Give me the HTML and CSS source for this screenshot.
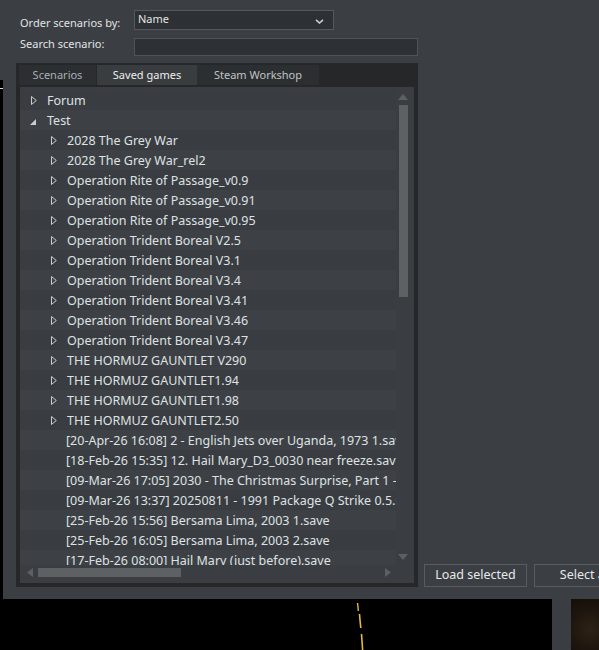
FILE: index.html
```html
<!DOCTYPE html>
<html>
<head>
<meta charset="utf-8">
<link rel="stylesheet" href="styles.css">
</head>
<body>
<div class="screen">
  <div class="top">
    <div class="edge"></div>
    <div class="window">
      <div class="form">
        <div class="labels">
          <div class="label">Order scenarios by:</div>
          <div class="label">Search scenario:</div>
        </div>
        <div class="fields">
          <div class="select">
            <span>Name</span>
            <svg class="chev" width="9" height="5" viewBox="0 0 9 5"><polyline points="1,0.8 4.5,4 8,0.8" fill="none" stroke="#c9cdd1" stroke-width="1.6"/></svg>
          </div>
          <div class="search"></div>
        </div>
      </div>
      <div class="workspace">
        <div class="tabpanel">
          <div class="tabs">
            <div class="tab">Scenarios</div>
            <div class="tab active">Saved games</div>
            <div class="tab wide">Steam Workshop</div>
          </div>
          <div class="tree">
            <div class="rows">
              <div class="row"><svg class="tri" width="6" height="9" viewBox="0 0 6 9"><polygon points="0.5,0.5 5.3,4.5 0.5,8.5" fill="none" stroke="#c9cdd1" stroke-width="1"/></svg><span>Forum</span></div>
              <div class="row"><svg class="tri open" width="6" height="6" viewBox="0 0 6 6"><polygon points="6,0 6,6 0,6" fill="#c9cdd1"/></svg><span>Test</span></div>
              <div class="row child"><svg class="tri" width="6" height="9" viewBox="0 0 6 9"><polygon points="0.5,0.5 5.3,4.5 0.5,8.5" fill="none" stroke="#c9cdd1" stroke-width="1"/></svg><span>2028 The Grey War</span></div>
              <div class="row child"><svg class="tri" width="6" height="9" viewBox="0 0 6 9"><polygon points="0.5,0.5 5.3,4.5 0.5,8.5" fill="none" stroke="#c9cdd1" stroke-width="1"/></svg><span>2028 The Grey War_rel2</span></div>
              <div class="row child"><svg class="tri" width="6" height="9" viewBox="0 0 6 9"><polygon points="0.5,0.5 5.3,4.5 0.5,8.5" fill="none" stroke="#c9cdd1" stroke-width="1"/></svg><span>Operation Rite of Passage_v0.9</span></div>
              <div class="row child"><svg class="tri" width="6" height="9" viewBox="0 0 6 9"><polygon points="0.5,0.5 5.3,4.5 0.5,8.5" fill="none" stroke="#c9cdd1" stroke-width="1"/></svg><span>Operation Rite of Passage_v0.91</span></div>
              <div class="row child"><svg class="tri" width="6" height="9" viewBox="0 0 6 9"><polygon points="0.5,0.5 5.3,4.5 0.5,8.5" fill="none" stroke="#c9cdd1" stroke-width="1"/></svg><span>Operation Rite of Passage_v0.95</span></div>
              <div class="row child"><svg class="tri" width="6" height="9" viewBox="0 0 6 9"><polygon points="0.5,0.5 5.3,4.5 0.5,8.5" fill="none" stroke="#c9cdd1" stroke-width="1"/></svg><span>Operation Trident Boreal V2.5</span></div>
              <div class="row child"><svg class="tri" width="6" height="9" viewBox="0 0 6 9"><polygon points="0.5,0.5 5.3,4.5 0.5,8.5" fill="none" stroke="#c9cdd1" stroke-width="1"/></svg><span>Operation Trident Boreal V3.1</span></div>
              <div class="row child"><svg class="tri" width="6" height="9" viewBox="0 0 6 9"><polygon points="0.5,0.5 5.3,4.5 0.5,8.5" fill="none" stroke="#c9cdd1" stroke-width="1"/></svg><span>Operation Trident Boreal V3.4</span></div>
              <div class="row child"><svg class="tri" width="6" height="9" viewBox="0 0 6 9"><polygon points="0.5,0.5 5.3,4.5 0.5,8.5" fill="none" stroke="#c9cdd1" stroke-width="1"/></svg><span>Operation Trident Boreal V3.41</span></div>
              <div class="row child"><svg class="tri" width="6" height="9" viewBox="0 0 6 9"><polygon points="0.5,0.5 5.3,4.5 0.5,8.5" fill="none" stroke="#c9cdd1" stroke-width="1"/></svg><span>Operation Trident Boreal V3.46</span></div>
              <div class="row child"><svg class="tri" width="6" height="9" viewBox="0 0 6 9"><polygon points="0.5,0.5 5.3,4.5 0.5,8.5" fill="none" stroke="#c9cdd1" stroke-width="1"/></svg><span>Operation Trident Boreal V3.47</span></div>
              <div class="row child"><svg class="tri" width="6" height="9" viewBox="0 0 6 9"><polygon points="0.5,0.5 5.3,4.5 0.5,8.5" fill="none" stroke="#c9cdd1" stroke-width="1"/></svg><span>THE HORMUZ GAUNTLET V290</span></div>
              <div class="row child"><svg class="tri" width="6" height="9" viewBox="0 0 6 9"><polygon points="0.5,0.5 5.3,4.5 0.5,8.5" fill="none" stroke="#c9cdd1" stroke-width="1"/></svg><span>THE HORMUZ GAUNTLET1.94</span></div>
              <div class="row child"><svg class="tri" width="6" height="9" viewBox="0 0 6 9"><polygon points="0.5,0.5 5.3,4.5 0.5,8.5" fill="none" stroke="#c9cdd1" stroke-width="1"/></svg><span>THE HORMUZ GAUNTLET1.98</span></div>
              <div class="row child"><svg class="tri" width="6" height="9" viewBox="0 0 6 9"><polygon points="0.5,0.5 5.3,4.5 0.5,8.5" fill="none" stroke="#c9cdd1" stroke-width="1"/></svg><span>THE HORMUZ GAUNTLET2.50</span></div>
              <div class="row leaf"><span>[20-Apr-26 16:08] 2 - English Jets over Uganda, 1973 1.save</span></div>
              <div class="row leaf"><span>[18-Feb-26 15:35] 12. Hail Mary_D3_0030 near freeze.save</span></div>
              <div class="row leaf"><span>[09-Mar-26 17:05] 2030 - The Christmas Surprise, Part 1 - 1.save</span></div>
              <div class="row leaf"><span>[09-Mar-26 13:37] 20250811 - 1991 Package Q Strike 0.5.save</span></div>
              <div class="row leaf"><span>[25-Feb-26 15:56] Bersama Lima, 2003 1.save</span></div>
              <div class="row leaf"><span>[25-Feb-26 16:05] Bersama Lima, 2003 2.save</span></div>
              <div class="row leaf"><span>[17-Feb-26 08:00] Hail Mary (just before).save</span></div>
            </div>
            <div class="vscroll">
              <svg width="10" height="6" viewBox="0 0 10 6"><polygon points="5,0 10,6 0,6" fill="#5c6064"/></svg>
              <div class="vthumb"></div>
              <div class="vspace"></div>
              <svg width="10" height="6" viewBox="0 0 10 6"><polygon points="0,0 10,0 5,6" fill="#5c6064"/></svg>
            </div>
            <div class="hscroll">
              <svg width="6" height="9" viewBox="0 0 6 9"><polygon points="6,0 6,9 0,4.5" fill="#5c6064"/></svg>
              <div class="hthumb"></div>
              <div class="hspace"></div>
              <svg width="6" height="9" viewBox="0 0 6 9"><polygon points="0,0 6,4.5 0,9" fill="#5c6064"/></svg>
            </div>
            <div class="corner"></div>
          </div>
        </div>
        <div class="actions">
          <div class="btn">Load selected</div>
          <div class="btn">Select all</div>
        </div>
      </div>
    </div>
  </div>
  <div class="under">
    <div class="void">
      <svg width="12" height="51" viewBox="0 0 12 51"><polyline points="2.5,4 3,8 3.3,12" fill="none" stroke="#e2bd36" stroke-width="1.4"/><polyline points="4.5,15 5,21 5.8,29" fill="none" stroke="#e2bd36" stroke-width="1.6"/><polyline points="6.5,35 7,42 7.6,51" fill="none" stroke="#e2bd36" stroke-width="1.6"/></svg>
    </div>
    <div class="pillar"></div>
    <div class="photo"></div>
  </div>
</div>
</body>
</html>
```
FILE: styles.css
```css
html, body {
  margin: 0;
  padding: 0;
  background: #000;
}
.screen {
  width: 599px;
  height: 650px;
  overflow: hidden;
  font-family: "Noto Sans", "Open Sans", sans-serif;
  font-size: 11px;
  color: #e2e4e6;
}
.top {
  display: flex;
  height: 599px;
}
.edge {
  width: 3px;
  flex-shrink: 0;
  background: linear-gradient(#3b3f43 0 80px, #000 80px 88px, #d8d8d8 88px 89px, #000 89px);
}
.window {
  flex: 1;
  min-width: 0;
  background: #3b3f43;
  padding: 10px 0 0 13px;
  box-sizing: border-box;
  overflow: hidden;
}
.form {
  display: flex;
  padding-left: 4px;
}
.labels {
  width: 114px;
  flex-shrink: 0;
  display: flex;
  flex-direction: column;
  gap: 5px;
  padding-top: 5px;
}
.label {
  line-height: 16px;
  height: 16px;
  white-space: nowrap;
}
.fields {
  display: flex;
  flex-direction: column;
  gap: 8px;
}
.select {
  width: 200px;
  height: 20px;
  box-sizing: border-box;
  border: 1px solid #55595d;
  background: #2d3034;
  display: flex;
  align-items: flex-start;
  justify-content: space-between;
  padding: 0 9px 0 3px;
  line-height: 14px;
}
.select span {
  margin-top: 1px;
}
.chev {
  margin-top: 8px;
}
.search {
  width: 284px;
  height: 18px;
  box-sizing: border-box;
  border: 1px solid #505458;
  background: #2d3034;
}
.workspace {
  margin-top: 7px;
  display: flex;
  align-items: flex-end;
  gap: 6px;
}
.tabpanel {
  width: 402px;
  height: 524px;
  flex-shrink: 0;
  box-sizing: border-box;
  background: #262728;
  padding: 2px 4px 4px 4px;
  display: flex;
  flex-direction: column;
  gap: 2px;
}
.tabs {
  display: flex;
  height: 20px;
  margin-left: -1px;
}
.tab {
  width: 77px;
  height: 20px;
  line-height: 20px;
  text-align: center;
  background: #2c2f32;
  color: #a9aeb3;
}
.tab.active {
  width: 100px;
  margin-left: 1px;
  background: #3a3d40;
  color: #eceeef;
}
.tab.wide {
  width: 122px;
  color: #c0c3c6;
}
.tree {
  width: 394px;
  height: 496px;
  background: #3a3e42;
  display: grid;
  grid-template-columns: 376px 18px;
  grid-template-rows: 478px 18px;
}
.rows {
  overflow: hidden;
  padding-top: 3px;
}
.row {
  height: 20px;
  display: flex;
  align-items: center;
  white-space: nowrap;
  background: #393d41;
  color: #dfe1e3;
  font-size: 12.5px;
}
.row:nth-child(even) {
  background: #3d4145;
}
.row .tri {
  flex-shrink: 0;
  margin-left: 11px;
  margin-right: 10px;
}
.row .tri.open {
  margin-left: 10px;
  margin-right: 11px;
  margin-top: 3px;
}
.row.child .tri {
  margin-left: 31px;
}
.row.leaf span {
  margin-left: 46px;
}
.vscroll {
  display: flex;
  flex-direction: column;
  align-items: flex-start;
  padding: 7px 0 5px 2px;
}
.vthumb {
  width: 9px;
  margin-left: 1px;
  height: 192px;
  margin-top: 5px;
  background: #5e6164;
}
.vspace {
  flex: 1;
}
.hscroll {
  display: flex;
  align-items: flex-start;
  padding: 3px 5px 0 7px;
}
.hthumb {
  width: 143px;
  height: 9px;
  margin-left: 5px;
  background: #5e6164;
}
.hspace {
  flex: 1;
}
.actions {
  display: flex;
  gap: 7px;
  flex-shrink: 0;
}
.btn {
  width: 103px;
  height: 23px;
  box-sizing: border-box;
  border: 1px solid #585c60;
  background: #3b3f43;
  text-align: center;
  line-height: 20px;
  font-size: 12.5px;
  color: #e6e8ea;
  white-space: nowrap;
  flex-shrink: 0;
}
.under {
  display: flex;
  height: 51px;
}
.void {
  width: 552px;
  flex-shrink: 0;
  background: #000;
  padding-left: 355px;
  box-sizing: border-box;
}
.void svg {
  display: block;
}
.pillar {
  width: 19px;
  flex-shrink: 0;
  background: #3a3e42;
}
.photo {
  flex: 1;
  background: radial-gradient(circle at 70% 60%, #2e2216 0%, #1e160e 55%, #140e08 100%);
}
```
